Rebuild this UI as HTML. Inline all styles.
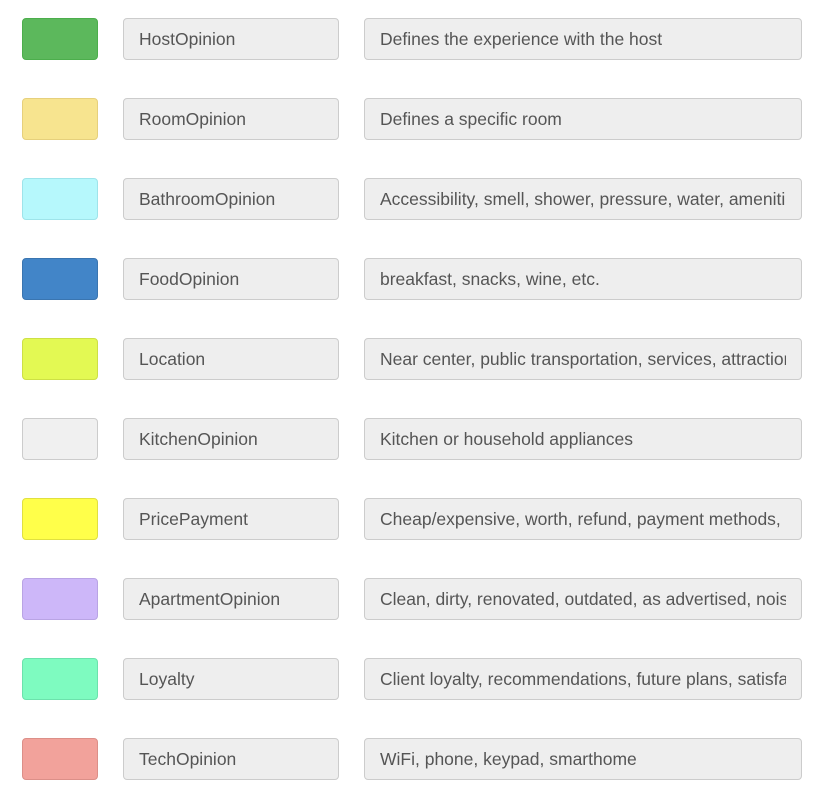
<!DOCTYPE html>
<html><head><style>
body{margin:0;background:#fff;width:832px;height:805px;overflow:hidden;font-family:"Liberation Sans",sans-serif;}
.row{position:absolute;left:0;height:42px;}
.sw{position:absolute;left:22px;top:0;width:74px;height:40px;border:1px solid #ccc;border-radius:4px;}
.box{position:absolute;top:0;height:40px;border:1px solid #ccc;border-radius:4px;background:#eee;color:#555;font-size:17.5px;line-height:40px;box-sizing:content-box;white-space:nowrap;}
.box span{position:absolute;left:15px;right:15px;top:0;overflow:hidden;}
.n{left:123px;width:214px;}
.d{left:364px;width:436px;}
</style></head><body>
<div class="row" style="top:18px"><div class="sw" style="background:#5cb85c;border-color:#4cae4c"></div><div class="box n"><span>HostOpinion</span></div><div class="box d"><span>Defines the experience with the host</span></div></div>
<div class="row" style="top:98px"><div class="sw" style="background:#f7e48f;border-color:#e6d07c"></div><div class="box n"><span>RoomOpinion</span></div><div class="box d"><span>Defines a specific room</span></div></div>
<div class="row" style="top:178px"><div class="sw" style="background:#b6f8fc;border-color:#9ee4ea"></div><div class="box n"><span>BathroomOpinion</span></div><div class="box d"><span>Accessibility, smell, shower, pressure, water, amenities</span></div></div>
<div class="row" style="top:258px"><div class="sw" style="background:#4285c8;border-color:#3a75b0"></div><div class="box n"><span>FoodOpinion</span></div><div class="box d"><span>breakfast, snacks, wine, etc.</span></div></div>
<div class="row" style="top:338px"><div class="sw" style="background:#e3f953;border-color:#cde045"></div><div class="box n"><span>Location</span></div><div class="box d"><span>Near center, public transportation, services, attractions</span></div></div>
<div class="row" style="top:418px"><div class="sw" style="background:#f0f0f0;border-color:#ccc"></div><div class="box n"><span>KitchenOpinion</span></div><div class="box d"><span>Kitchen or household appliances</span></div></div>
<div class="row" style="top:498px"><div class="sw" style="background:#ffff4a;border-color:#e0e040"></div><div class="box n"><span>PricePayment</span></div><div class="box d"><span>Cheap/expensive, worth, refund, payment methods, etc.</span></div></div>
<div class="row" style="top:578px"><div class="sw" style="background:#cdb7f9;border-color:#b9a4e4"></div><div class="box n"><span>ApartmentOpinion</span></div><div class="box d"><span>Clean, dirty, renovated, outdated, as advertised, noise</span></div></div>
<div class="row" style="top:658px"><div class="sw" style="background:#7efbc0;border-color:#6ce2ac"></div><div class="box n"><span>Loyalty</span></div><div class="box d"><span>Client loyalty, recommendations, future plans, satisfaction</span></div></div>
<div class="row" style="top:738px"><div class="sw" style="background:#f2a29b;border-color:#dc8f88"></div><div class="box n"><span>TechOpinion</span></div><div class="box d"><span>WiFi, phone, keypad, smarthome</span></div></div>
</body></html>
